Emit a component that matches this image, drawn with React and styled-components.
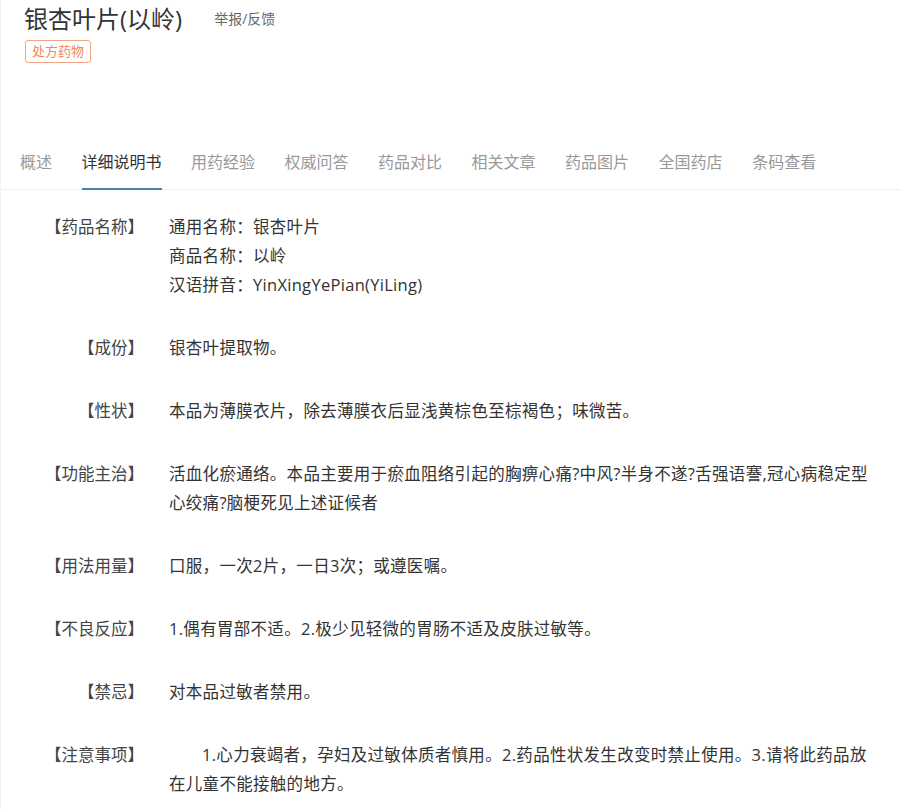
import React from 'react';
import styled, { createGlobalStyle } from 'styled-components';

const GlobalStyle = createGlobalStyle`
  body {
    margin: 0;
    background: #fff;
    font-family: "Open Sans", "Noto Sans CJK SC", sans-serif;
  }
`;

const tabs = ['概述', '详细说明书', '用药经验', '权威问答', '药品对比', '相关文章', '药品图片', '全国药店', '条码查看'];

const rows = [
  { label: '【药品名称】', lines: ['通用名称：银杏叶片', '商品名称：以岭', '汉语拼音：YinXingYePian(YiLing)'] },
  { label: '【成份】', lines: ['银杏叶提取物。'] },
  { label: '【性状】', lines: ['本品为薄膜衣片，除去薄膜衣后显浅黄棕色至棕褐色；味微苦。'] },
  { label: '【功能主治】', lines: ['活血化瘀通络。本品主要用于瘀血阻络引起的胸痹心痛?中风?半身不遂?舌强语謇,冠心病稳定型', '心绞痛?脑梗死见上述证候者'] },
  { label: '【用法用量】', lines: ['口服，一次2片，一日3次；或遵医嘱。'] },
  { label: '【不良反应】', lines: ['1.偶有胃部不适。2.极少见轻微的胃肠不适及皮肤过敏等。'] },
  { label: '【禁忌】', lines: ['对本品过敏者禁用。'] },
  { label: '【注意事项】', indent: true, lines: ['1.心力衰竭者，孕妇及过敏体质者慎用。2.药品性状发生改变时禁止使用。3.请将此药品放', '在儿童不能接触的地方。'] },
];

export default function App() {
  return (
    <Page>
      <GlobalStyle />
      <Header>
        <TitleRow>
          <Title>银杏叶片(以岭)</Title>
          <Report>举报/反馈</Report>
        </TitleRow>
        <Tag>处方药物</Tag>
      </Header>
      <TabBar>
        {tabs.map((t, i) => (
          <Tab key={t} active={i === 1}>{t}</Tab>
        ))}
      </TabBar>
      <Content>
        {rows.map((r) => (
          <Row key={r.label}>
            <Label>{r.label}</Label>
            <Value>
              {r.lines.map((l, i) => (
                <Line key={i} indent={r.indent && i === 0}>{l}</Line>
              ))}
            </Value>
          </Row>
        ))}
      </Content>
    </Page>
  );
}

const Page = styled.div`
  width: 901px;
  min-height: 809px;
  border-left: 1px solid #f2f2f2;
  box-sizing: border-box;
  color: #333;
`;

const Header = styled.div`
  padding: 3px 0 0 23px;
  height: 136px;
  box-sizing: border-box;
`;

const TitleRow = styled.div`
  display: flex;
  align-items: center;
  gap: 32px;
  height: 32px;
`;

const Title = styled.h1`
  margin: 0;
  font-size: 24px;
  font-weight: 400;
  color: #333;
  line-height: 32px;
`;

const Report = styled.span`
  font-size: 14px;
  color: #666;
  margin-top: -3px;
`;

const Tag = styled.span`
  display: inline-block;
  margin-top: 5px;
  margin-left: 1px;
  padding: 0 6px;
  height: 21px;
  line-height: 21px;
  font-size: 13px;
  color: #f0885c;
  border: 1px solid #f1a688;
  border-radius: 3px;
`;

const TabBar = styled.div`
  display: flex;
  gap: 29.5px;
  padding-left: 19px;
  border-bottom: 1px solid #f0f0f0;
  height: 54px;
  box-sizing: border-box;
`;

const Tab = styled.div`
  font-size: 16px;
  line-height: 52px;
  color: ${(p) => (p.active ? '#333' : '#999')};
  border-bottom: 2px solid ${(p) => (p.active ? '#4a80b0' : 'transparent')};
  margin-bottom: -1px;
`;

const Content = styled.div`
  padding-top: 22px;
  display: flex;
  flex-direction: column;
  gap: 34px;
`;

const Row = styled.div`
  display: flex;
  font-size: 16.5px;
  line-height: 29px;
`;

const Label = styled.div`
  width: 143px;
  text-align: right;
  flex-shrink: 0;
  color: #444;
`;

const Value = styled.div`
  margin-left: 25px;
  width: 720px;
  color: #333;
  letter-spacing: 0.3px;
`;

const Line = styled.div`
  white-space: nowrap;
  text-indent: ${(p) => (p.indent ? '33px' : '0')};
`;
